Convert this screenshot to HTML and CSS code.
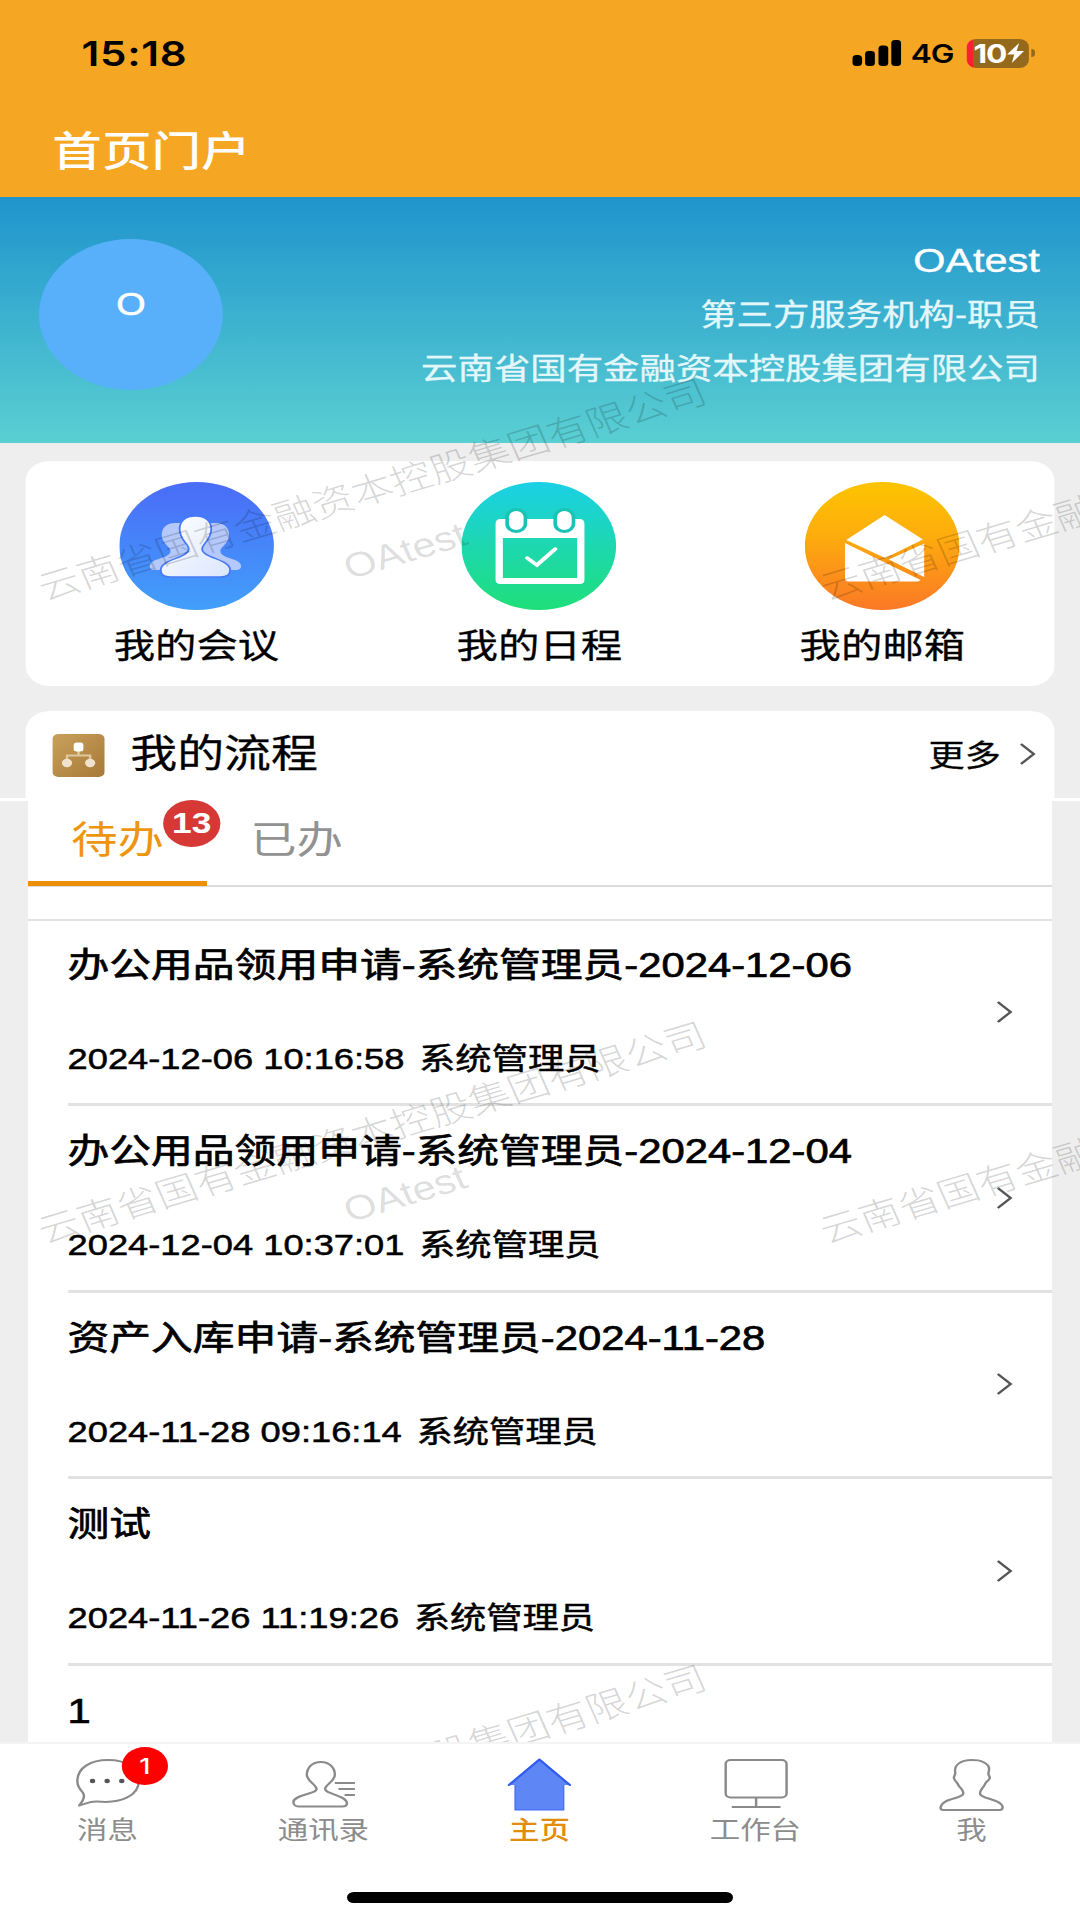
FILE: index.html
```html
<!DOCTYPE html>
<html lang="zh-CN">
<head>
    <meta charset="UTF-8">
    <meta name="viewport" content="width=device-width, initial-scale=1.0">
    <title>首页门户</title>
    <link rel="stylesheet" href="styles.css">
</head>
<body>
    <div class="phone">
        <header class="header">
            <div class="status-bar">
                <span class="time">15:18</span>
                <div class="status-right">
                    <svg class="signal" width="42" height="26" viewBox="0 0 42 26">
                        <rect x="0" y="15" width="8" height="11" rx="3.500"/>
                        <rect x="10.500" y="11" width="8" height="15" rx="3"/>
                        <rect x="21.500" y="5.500" width="8" height="20.5" rx="3"/>
                        <rect x="32" y="0" width="8" height="26" rx="3"/>
                    </svg>
                    <span class="network">4G</span>
                    <div class="battery">
                        <span>10</span>
                        <svg width="14" height="20" viewBox="0 0 14 20"><path d="M10 0L0 11.500H6L4 20L14 8H8Z" fill="#fff"/></svg>
                    </div>
                    <i class="battery-cap"></i>
                </div>
            </div>
            <h1>首页门户</h1>
        </header>

        <section class="profile">
            <div class="avatar">O</div>
            <div class="profile-info">
                <p class="user">OAtest</p>
                <p>第三方服务机构-职员</p>
                <p>云南省国有金融资本控股集团有限公司</p>
            </div>
        </section>

        <main class="content">
            <nav class="card shortcuts">
                <a class="shortcut">
                    <svg width="127" height="128" viewBox="0 0 127 128">
                        <defs>
                            <linearGradient id="blue" x1="0" y1="0" x2="0" y2="1"><stop offset="0" stop-color="#4a6cf7"/><stop offset="1" stop-color="#429ffb"/></linearGradient>
                            <linearGradient id="person" x1="0" y1="0" x2="1" y2="1"><stop offset="0" stop-color="#fff"/><stop offset="1" stop-color="#dbe6fd"/></linearGradient>
                        </defs>
                        <ellipse cx="63.5" cy="64" rx="63.5" ry="64" fill="url(#blue)"/>
                        <g fill="#b4c8fb">
                            <path d="M46 41C38 41 34 47 35 55C36 62 42 65 42 69C42 77 25 76 25 84C25 88 27 88 30 88H62V41Z"/>
                            <path d="M79 41C87 41 91 47 90 55C89 62 83 65 83 69C83 77 100 76 100 84C100 88 97 88 95 88H62V41Z"/>
                        </g>
                        <path d="M62.500 34C70.500 34 75.500 39 75.500 47C75.500 58 68 62 68 67C68 76 91 77 91 88C91 93 88 95 83 95H42C37 95 34 93 34 88C34 77 57 76 57 67C57 62 49.500 58 49.500 47C49.500 39 54.500 34 62.500 34Z" fill="url(#person)" stroke="#4779f8" stroke-width="1.500"/>
                    </svg>
                    <span>我的会议</span>
                </a>
                <a class="shortcut">
                    <svg width="127" height="128" viewBox="0 0 127 128">
                        <defs><linearGradient id="green" x1="0" y1="0" x2="0" y2="1"><stop offset="0" stop-color="#1bd0e6"/><stop offset="1" stop-color="#1fdf79"/></linearGradient></defs>
                        <ellipse cx="63.5" cy="64" rx="63.5" ry="64" fill="url(#green)"/>
                        <path fill="#fff" fill-rule="evenodd" d="M32 37H97Q101 37 101 42V98Q101 102 97 102H32Q28 102 28 98V42Q28 37 32 37ZM34 56V96H95V56Z"/>
                        <g fill="#fff" stroke="#1ac3b5" stroke-width="3">
                            <rect x="37.500" y="27.500" width="15" height="22" rx="7.500"/>
                            <rect x="77" y="27.500" width="15" height="22" rx="7.500"/>
                        </g>
                        <path d="M54 76L62 83L77 67" fill="none" stroke="#fff" stroke-width="3.500" stroke-linecap="round"/>
                    </svg>
                    <span>我的日程</span>
                </a>
                <a class="shortcut">
                    <svg width="127" height="128" viewBox="0 0 127 128">
                        <defs><linearGradient id="orange" x1="0" y1="0" x2="0" y2="1"><stop offset="0" stop-color="#fdc400"/><stop offset=".4" stop-color="#fdae0c"/><stop offset="1" stop-color="#fb7826"/></linearGradient></defs>
                        <ellipse cx="63.5" cy="64" rx="63.5" ry="64" fill="url(#orange)"/>
                        <g fill="#fff">
                            <path d="M65.500 33L97 57.500L66 76L34 58Z"/>
                            <path d="M33 61L95 98Q94 99.500 92 99.500H36Q33 99.500 33 96Z"/>
                            <path d="M69 77.500L98 61.500V95Z"/>
                        </g>
                    </svg>
                    <span>我的邮箱</span>
                </a>
            </nav>

            <section class="process">
                <div class="card process-head">
                    <svg width="43" height="43" viewBox="0 0 43 43">
                        <defs><linearGradient id="gold" x1="0" y1="0" x2="1" y2="1"><stop offset="0" stop-color="#c8a05c"/><stop offset="1" stop-color="#a77a36"/></linearGradient></defs>
                        <rect width="43" height="43" rx="5" fill="url(#gold)"/>
                        <path d="M21.500 15V21M12 28V21.500H31V28" fill="none" stroke="#e0c9a0" stroke-width="2"/>
                        <rect x="17.500" y="8.500" width="8" height="9" rx="2.500" fill="#fff"/>
                        <circle cx="12" cy="29" r="4.200" fill="#f0e2cc"/>
                        <circle cx="31" cy="29" r="4.200" fill="#f0e2cc"/>
                    </svg>
                    <h2>我的流程</h2>
                    <a class="more">更多
                        <svg class="chevron" width="14" height="22" viewBox="0 0 14 22"><path d="M1.500 1L12 11L1.500 21"/></svg>
                    </a>
                </div>
                <div class="process-body">
                    <div class="panel">
                        <div class="tabs">
                            <a class="tab active">待办<span class="count">13</span></a>
                            <a class="tab">已办</a>
                        </div>
                        <ul class="list">
                            <li>
                                <div class="item">
                                    <h3>办公用品领用申请-系统管理员-2024-12-06</h3>
                                    <p><span>2024-12-06 10:16:58</span><span>系统管理员</span></p>
                                </div>
                                <svg class="chevron" width="14" height="22" viewBox="0 0 14 22"><path d="M1.500 1L12 11L1.500 21"/></svg>
                            </li>
                            <li>
                                <div class="item">
                                    <h3>办公用品领用申请-系统管理员-2024-12-04</h3>
                                    <p><span>2024-12-04 10:37:01</span><span>系统管理员</span></p>
                                </div>
                                <svg class="chevron" width="14" height="22" viewBox="0 0 14 22"><path d="M1.500 1L12 11L1.500 21"/></svg>
                            </li>
                            <li>
                                <div class="item">
                                    <h3>资产入库申请-系统管理员-2024-11-28</h3>
                                    <p><span>2024-11-28 09:16:14</span><span>系统管理员</span></p>
                                </div>
                                <svg class="chevron" width="14" height="22" viewBox="0 0 14 22"><path d="M1.500 1L12 11L1.500 21"/></svg>
                            </li>
                            <li>
                                <div class="item">
                                    <h3>测试</h3>
                                    <p><span>2024-11-26 11:19:26</span><span>系统管理员</span></p>
                                </div>
                                <svg class="chevron" width="14" height="22" viewBox="0 0 14 22"><path d="M1.500 1L12 11L1.500 21"/></svg>
                            </li>
                            <li>
                                <div class="item">
                                    <h3>1</h3>
                                </div>
                            </li>
                        </ul>
                    </div>
                </div>
            </section>
        </main>

        <!-- 水印 -->
        <div class="watermarks">
            <div class="watermark left row1">云南省国有金融资本控股集团有限公司<br><span>OAtest</span></div>
            <div class="watermark right row1">云南省国有金融资本控股集团有限公司</div>
            <div class="watermark left row2">云南省国有金融资本控股集团有限公司<br><span>OAtest</span></div>
            <div class="watermark right row2">云南省国有金融资本控股集团有限公司</div>
            <div class="watermark left row3">云南省国有金融资本控股集团有限公司</div>
        </div>

        <footer class="tabbar">
            <div class="tabbar-items">
                <a>
                    <svg width="64" height="56" viewBox="0 0 64 56">
                        <path d="M33 3C18 3 7.500 11 7.500 24C7.500 29 10 33 12 35.500C14 39 13 43 9 48.500C14 47 18 44 24 44.500C44 47 58 38 58 24C58 11 47 3 33 3Z"/>
                        <g class="dots"><circle cx="20" cy="24" r="2.200"/><circle cx="32" cy="24" r="2.200"/><circle cx="44" cy="24" r="2.200"/></g>
                    </svg>
                    <span>消息</span>
                    <b class="unread">1</b>
                </a>
                <a>
                    <svg width="64" height="56" viewBox="0 0 64 56">
                        <path d="M29.500 5C22 5 18 11 18 18C18 24 26 28 26 32C26 37 7 38 7 45C7 48 9 49.500 11 49.500H47C50 49.500 51 48 51 46C50 38 33 37 33 32C33 28 41 24 41 18C41 11 37 5 29.500 5Z"/>
                        <path d="M41 26H57.500M44 32H57.500M49 38H57.500"/>
                    </svg>
                    <span>通讯录</span>
                </a>
                <a class="current">
                    <svg width="64" height="56" viewBox="0 0 64 56">
                        <path class="house" d="M12 27L32 6L52 27V53H12Z"/>
                        <path class="roof" d="M7 28L32 2.500L57 28"/>
                    </svg>
                    <span>主页</span>
                </a>
                <a>
                    <svg width="64" height="56" viewBox="0 0 64 56">
                        <rect x="8" y="3" width="50" height="37.500" rx="4"/>
                        <path d="M33 40.500V50M13 50H53"/>
                    </svg>
                    <span>工作台</span>
                </a>
                <a>
                    <svg width="64" height="56" viewBox="0 0 64 56">
                        <path d="M32 3C23 3 17.500 8 18.500 15C19 18 17 19 17.500 21C18 25 20 24 21 28C23 32 26 33 25 37C24 42 7 41 6.500 51Q6.500 53 9 53H55Q57.500 53 57.500 50C56 42 40 42 39 37C38 33 42 31 43 27C44 24 46 24 47 21C47 19 45 18 46 15C46.500 12 47 9 43 6C39 3 36 3 32 3Z"/>
                    </svg>
                    <span>我</span>
                </a>
            </div>
            <div class="home-indicator"></div>
        </footer>
    </div>
</body>
</html>
```

FILE: styles.css
```css
* {
    box-sizing: border-box;
    margin: 0;
    padding: 0;
}
body {
    width: 1080px;
    height: 1920px;
    overflow: hidden;
    font-family: "Liberation Sans", "Noto Sans CJK SC", sans-serif;
    color: #000;
}
/* the screen is wider than the phone layout, stretch it to fill */
.phone {
    position: relative;
    display: flex;
    flex-direction: column;
    width: 887px;
    height: 1920px;
    overflow: hidden;
    background: #eee;
    transform: scaleX(1.2176);
    transform-origin: 0 0;
}
svg {
    display: block;
    flex-shrink: 0;
}

/* header */
.header {
    flex-shrink: 0;
    height: 197px;
    padding: 33px 37px 0 43px;
    background: #f5a623;
}
.status-bar {
    display: flex;
    justify-content: space-between;
    align-items: center;
    height: 40px;
    padding-left: 24px;
    font-family: Inter, sans-serif;
}
.time {
    font-size: 34.5px;
    font-weight: 600;
    letter-spacing: 0.6px;
}
.status-right {
    display: flex;
    align-items: center;
}
.network {
    width: 36px;
    margin: 0 10px 0 6px;
    font-size: 26px;
    font-weight: 600;
    letter-spacing: -1px;
}
.battery {
    display: flex;
    align-items: center;
    justify-content: center;
    gap: 1px;
    width: 51px;
    height: 29px;
    padding-left: 2px;
    border-radius: 8px;
    background: linear-gradient(90deg, #fb1e35 5px, #94691c 5px);
    color: #fff;
    font-size: 26px;
    font-weight: 700;
    letter-spacing: -1px;
}
.battery-cap {
    width: 3px;
    height: 8px;
    margin-left: 2px;
    border-radius: 0 3px 3px 0;
    background: #94691c;
}
.header h1 {
    margin-top: 49px;
    font-size: 40.7px;
    line-height: 60px;
    font-weight: 500;
    color: #fff;
}

/* profile */
.profile {
    display: flex;
    flex-shrink: 0;
    justify-content: space-between;
    height: 246px;
    padding: 36px 33px 0 32px;
    background: linear-gradient(#1f94cd, #5acfd2);
    color: #fff;
}
.profile-info {
    text-align: right;
}
.avatar {
    flex-shrink: 0;
    width: 151px;
    height: 151px;
    margin-top: 6px;
    padding-top: 7px;
    border-radius: 50%;
    background: #57b0f9;
    font-size: 31px;
    line-height: 117px;
    text-align: center;
    -webkit-text-stroke: 0.6px #fff;
}
.profile-info p {
    font-size: 29.9px;
    line-height: 54px;
    color: #e3f7fb;
    -webkit-text-stroke: 0.3px #e3f7fb;
}
.profile-info .user {
    margin-bottom: 1px;
    font-size: 34px;
    color: #fff;
    -webkit-text-stroke: 0.4px #fff;
}

/* content */
.content {
    flex: 1;
    min-height: 0;
    padding-top: 18px;
    overflow: hidden;
}
.card {
    margin: 0 21px;
    border-radius: 20px;
    background: #fff;
}
.shortcuts {
    display: grid;
    grid-template-columns: repeat(3, 1fr);
    height: 225px;
    margin-bottom: 25px;
}
.shortcut {
    display: flex;
    flex-direction: column;
    align-items: center;
    padding: 21px 1px 0 0;
    font-size: 34px;
    line-height: 50px;
}
.shortcut span {
    margin-top: 11px;
}
.process-head {
    display: flex;
    align-items: center;
    height: 87px;
    padding: 2px 15px 0 22px;
    border-radius: 20px 20px 0 0;
}
.process-head h2 {
    margin-left: 21px;
    padding-bottom: 4px;
    font-size: 38.5px;
    line-height: 56px;
    font-weight: 400;
}
.shortcut span,
.process-head h2,
.more {
    -webkit-text-stroke: 0.3px #000;
}
.more {
    display: flex;
    align-items: center;
    gap: 15px;
    margin-left: auto;
    padding-bottom: 4px;
    font-size: 29.7px;
}
.chevron {
    fill: none;
    stroke: #555;
    stroke-width: 2.2;
}
.process-body {
    padding: 0 23px;
    border-top: 3px solid #fff;
}
.panel {
    background: #fff;
}
.tabs {
    display: flex;
    height: 86px;
    border-bottom: 2px solid #dcdcdc;
}
.tab {
    position: relative;
    width: 147px;
    height: 85px;
    font-size: 38px;
    line-height: 78px;
    text-align: center;
    color: #929292;
}
.tab.active {
    color: #ee950f;
    border-bottom: 5px solid #ee8f0a;
}
.count {
    position: absolute;
    top: -1px;
    left: 111px;
    width: 47px;
    height: 47px;
    border-radius: 50%;
    background: #d63935;
    color: #fff;
    font-size: 29px;
    font-weight: bold;
    line-height: 47px;
}
.list {
    margin-top: 32px;
    border-top: 2px solid #e2e2e2;
    list-style: none;
}
.list li {
    display: flex;
    align-items: center;
    justify-content: space-between;
    height: 186.5px;
    margin-left: 32.5px;
    padding-right: 32px;
    border-bottom: 3px solid #e2e2e2;
}
.list li:first-child {
    height: 185px;
}
.item {
    align-self: flex-start;
    padding-top: 20px;
    -webkit-text-stroke: 0.5px #000;
}
.list li:first-child .item {
    padding-top: 19px;
}
.item h3 {
    font-size: 34.3px;
    line-height: 50px;
    font-weight: 400;
    white-space: nowrap;
    -webkit-text-stroke: 0.7px #000;
}
.item p {
    display: flex;
    gap: 12px;
    margin-top: 47px;
    font-size: 29.8px;
    line-height: 44px;
}

/* watermark */
.watermarks {
    position: absolute;
    inset: 0;
    overflow: hidden;
    pointer-events: none;
}
.watermark {
    position: absolute;
    width: 600px;
    height: 132px;
    font-size: 34.2px;
    font-weight: 300;
    line-height: 66px;
    text-align: center;
    white-space: nowrap;
    color: rgba(0, 0, 0, 0.17);
    transform: rotate(-20deg);
}
.watermark span {
    margin-left: 9px;
    color: rgba(0, 0, 0, 0.14);
}
.watermark.left {
    left: 17px;
}
.watermark.right {
    left: 659px;
}
.watermark.row1 {
    top: 455px;
}
.watermark.row2 {
    top: 1098px;
}
.watermark.row3 {
    top: 1741px;
}

/* bottom tab bar */
.tabbar {
    position: relative;
    flex-shrink: 0;
    height: 178px;
    border-top: 2px solid #f4f4f4;
    background: #fff;
}
.tabbar-items {
    display: grid;
    grid-template-columns: repeat(5, 1fr);
    height: 148px;
}
.tabbar a {
    position: relative;
    display: flex;
    flex-direction: column;
    align-items: center;
    padding: 13px 1px 0 0;
    font-size: 25px;
    line-height: 35px;
    color: #8c8c8c;
}
.tabbar svg {
    fill: none;
    stroke: #8a8a8a;
    stroke-width: 2;
    stroke-linejoin: round;
}
.tabbar .dots {
    fill: #555;
    stroke: none;
}
.tabbar .house {
    fill: #5f86f5;
    stroke: #3f6af2;
    stroke-width: 1;
}
.tabbar .roof {
    fill: #5f86f5;
    stroke: #2f5cf0;
    stroke-width: 2;
    stroke-linecap: round;
}
.tabbar .current {
    color: #e08c0c;
    font-weight: 500;
}
.unread {
    position: absolute;
    top: 3px;
    left: 100px;
    width: 38px;
    height: 38px;
    border-radius: 50%;
    background: #f00;
    color: #fff;
    font-family: Inter, sans-serif;
    font-size: 22px;
    font-weight: 500;
    line-height: 38px;
    text-align: center;
}
.home-indicator {
    width: 317px;
    height: 11px;
    margin: 0 auto;
    border-radius: 6px;
    background: #000;
}
```
